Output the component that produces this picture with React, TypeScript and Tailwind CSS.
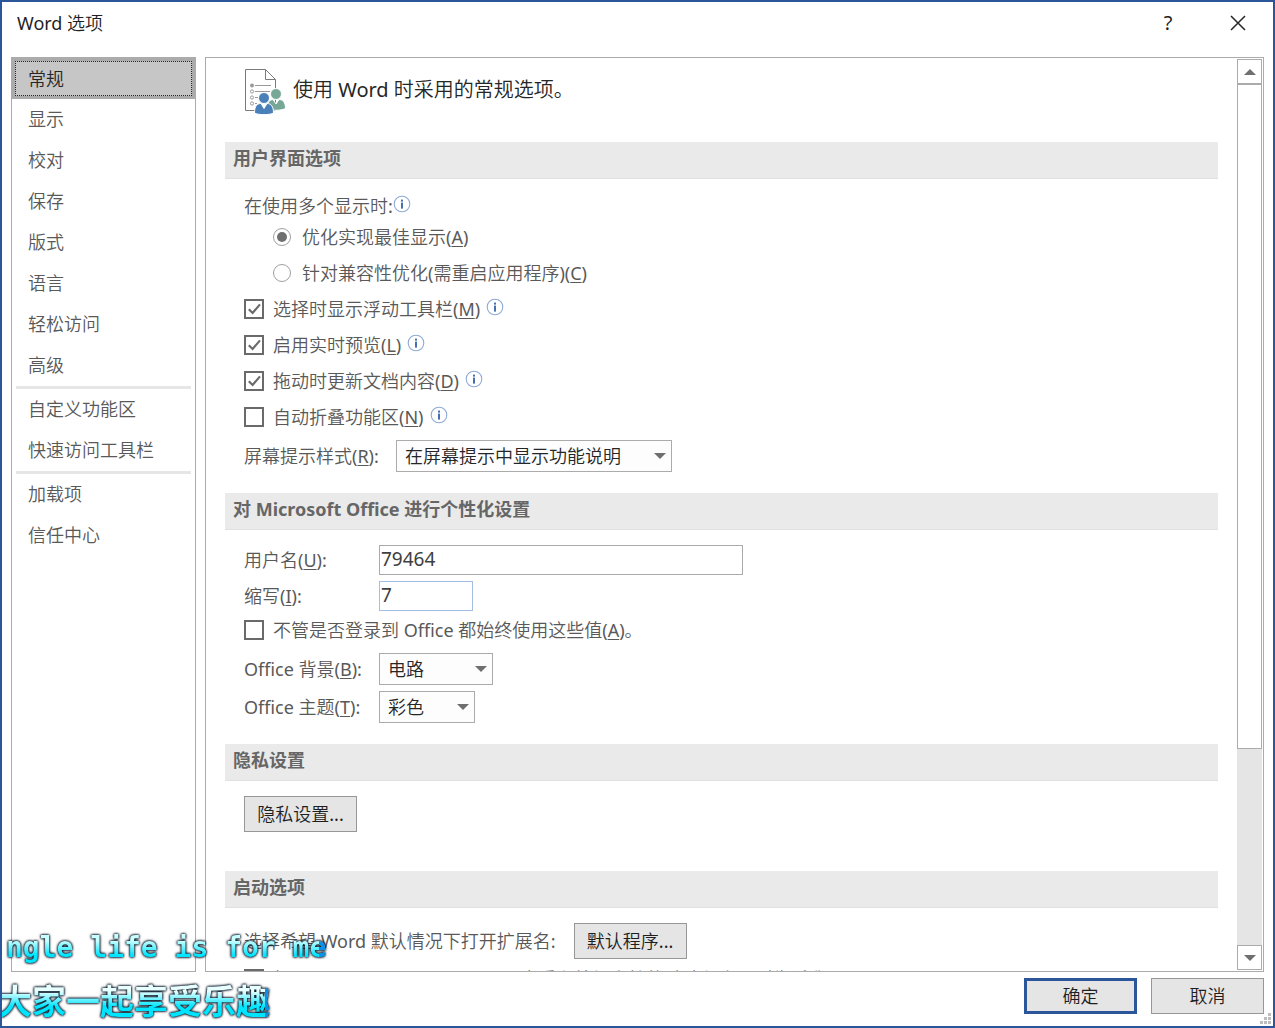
import { useState, type ReactNode } from 'react'

interface CheckOptionProps {
  label: ReactNode
  defaultChecked?: boolean
  info?: boolean
}

interface SelectBoxProps {
  id: string
  options: string[]
  className: string
}

const navGroups: string[][] = [
  ['常规', '显示', '校对', '保存', '版式', '语言', '轻松访问', '高级'],
  ['自定义功能区', '快速访问工具栏'],
  ['加载项', '信任中心'],
]

const buttonClass = 'h-9 w-[113px] shrink-0 bg-[#e5e5e5] text-[#1f1f1f]'

// Underlined access key
const Key = ({ children }: { children: string }) => (
  <span className="underline decoration-1 underline-offset-2">{children}</span>
)

const InfoIcon = () => (
  <svg width="18" height="18" viewBox="0 0 18 18" className="mb-1 shrink-0" aria-hidden="true">
    <circle cx="9" cy="9" r="7.8" fill="#fff" stroke="#8faad6" strokeWidth="1.1" />
    <rect x="8" y="4.6" width="2" height="2" fill="#456fb0" />
    <rect x="8" y="7.6" width="2" height="6" fill="#456fb0" />
  </svg>
)

function CheckOption({ label, defaultChecked = false, info = false }: CheckOptionProps) {
  return (
    <div className="flex h-9 items-center gap-1.5">
      <label className="flex items-center gap-[9px] whitespace-nowrap">
        <span className="grid size-5 place-items-center">
          <input
            type="checkbox"
            defaultChecked={defaultChecked}
            className="peer col-start-1 row-start-1 size-5 appearance-none border-2 border-[#6a6a6a] bg-white"
          />
          <svg
            viewBox="0 0 20 20"
            className="pointer-events-none col-start-1 row-start-1 hidden size-5 peer-checked:block"
            fill="none"
            stroke="#6a6a6a"
            strokeWidth="2.2"
          >
            <path d="M4.8 10.2 L8.6 14 L16 5.4" />
          </svg>
        </span>
        <span>{label}</span>
      </label>
      {info && <InfoIcon />}
    </div>
  )
}

function RadioOption({ label, defaultChecked = false }: CheckOptionProps) {
  return (
    <label className="ml-[29px] flex h-9 items-center gap-[11px] whitespace-nowrap">
      <span className="grid size-[18px] place-items-center">
        <input
          type="radio"
          name="display"
          defaultChecked={defaultChecked}
          className="peer col-start-1 row-start-1 size-[18px] appearance-none rounded-full border border-[#a0a0a0] bg-white"
        />
        <span className="pointer-events-none col-start-1 row-start-1 hidden size-2.5 rounded-full bg-[#6f6f6f] peer-checked:block" />
      </span>
      <span>{label}</span>
    </label>
  )
}

function SelectBox({ id, options, className }: SelectBoxProps) {
  return (
    <span className={`grid h-8 items-center ${className}`}>
      <select
        id={id}
        className="col-start-1 row-start-1 h-8 w-full appearance-none border border-[#ababab] bg-[#fdfdfd] pl-2 text-[#262626]"
      >
        {options.map((option) => (
          <option key={option}>{option}</option>
        ))}
      </select>
      <svg
        width="12"
        height="6"
        viewBox="0 0 12 6"
        className="pointer-events-none col-start-1 row-start-1 mr-1.5 justify-self-end"
      >
        <path d="M0 0 H12 L6 6 Z" fill="#6f6f6f" />
      </svg>
    </span>
  )
}

const SectionTitle = ({ children }: { children: ReactNode }) => (
  <h2 className="flex h-[37px] items-center border-b border-[#e0e0e0] bg-[#eaeaea] pb-1 pl-2 font-['Noto_Sans','Noto_Sans_CJK_SC',sans-serif] font-bold text-[#666]">
    {children}
  </h2>
)

const PageIcon = () => (
  <svg width="41" height="46" viewBox="0 0 41 46" className="shrink-0" aria-hidden="true">
    <path d="M0.5 0.5 H20.5 L30.5 10.5 V41.5 H0.5 Z" fill="#fff" stroke="#7b7b7b" />
    <path d="M20.5 0.5 V10.5 H30.5" fill="none" stroke="#7b7b7b" />
    <circle cx="7" cy="16.5" r="2" fill="#9a9a9a" />
    <g fill="none" stroke="#9a9a9a">
      <circle cx="7" cy="22.5" r="1.6" />
      <circle cx="7" cy="28.5" r="1.6" />
      <circle cx="7" cy="34.5" r="1.6" />
      <path d="M10 16.5 H26 M10 22.5 H25 M10 28.5 H13 M10 34.5 H12" />
    </g>
    <g fill="#77a797" stroke="#fff">
      <path d="M22 40 C22 33 25 30.5 28 30.5 L31 35 L34 30.5 C38 30.5 40.5 33.5 40.5 39.5 C37 41.5 28 42 22 40 Z" />
      <circle cx="31" cy="25" r="5.5" />
    </g>
    <g fill="#4a80b9" stroke="#fff">
      <path d="M9.5 44 C9.5 37 12 34.5 16 34.5 L19 39.5 L22 34.5 C26 34.5 28.5 37.5 28.5 44 C25 46.2 13 46.2 9.5 44 Z" />
      <circle cx="19" cy="29" r="5.5" />
    </g>
  </svg>
)

function Sidebar() {
  const [active, setActive] = useState('常规')

  return (
    <nav className="w-[185px] shrink-0 border border-[#ababab] bg-white">
      {navGroups.map((group, index) => (
        <div key={group[0]}>
          {index > 0 && <div className="mx-1 h-[3px] bg-[#e6e6e6]" />}
          {group.map((item) => (
            <button
              key={item}
              type="button"
              onClick={() => setActive(item)}
              className={`block h-[41px] w-full text-left ${
                active === item ? 'bg-[#ababab] p-[3px] text-[#262626]' : 'pb-0.5 pl-4'
              }`}
            >
              {active === item ? (
                <span className="flex h-full items-center border border-dotted border-[#262626] bg-[#c6c6c6] pl-3">
                  {item}
                </span>
              ) : (
                item
              )}
            </button>
          ))}
        </div>
      ))}
    </nav>
  )
}

function ScrollBar() {
  return (
    <div className="my-px mr-px flex w-[25px] shrink-0 flex-col bg-[#e5e5e5]">
      <button type="button" aria-label="向上滚动" className="grid h-[25px] place-items-center border border-[#ababab] bg-white">
        <svg width="12" height="6" viewBox="0 0 12 6">
          <path d="M0 6 H12 L6 0 Z" fill="#6f6f6f" />
        </svg>
      </button>
      <div className="flex-1">
        <div className="h-[77.25%] border border-[#ababab] bg-white" />
      </div>
      <button type="button" aria-label="向下滚动" className="grid h-[25px] place-items-center border border-[#ababab] bg-white">
        <svg width="12" height="6" viewBox="0 0 12 6">
          <path d="M0 0 H12 L6 6 Z" fill="#6f6f6f" />
        </svg>
      </button>
    </div>
  )
}

function GeneralOptions() {
  return (
    <main className="min-w-0 flex-1 overflow-hidden px-[19px]">
      <header className="flex h-[84px] items-start gap-[7px] pt-[11px] pl-5">
        <PageIcon />
        <h1 className="text-xl leading-[42px] text-[#262626]">使用 Word 时采用的常规选项。</h1>
      </header>

      <SectionTitle>用户界面选项</SectionTitle>
      <div className="pt-[13px] pb-[21px] pl-[19px]">
        <div className="flex h-[27px] items-center">
          在使用多个显示时:
          <InfoIcon />
        </div>
        <RadioOption label={<>优化实现最佳显示(<Key>A</Key>)</>} defaultChecked />
        <RadioOption label={<>针对兼容性优化(需重启应用程序)(<Key>C</Key>)</>} />
        <CheckOption label={<>选择时显示浮动工具栏(<Key>M</Key>)</>} defaultChecked info />
        <CheckOption label={<>启用实时预览(<Key>L</Key>)</>} defaultChecked info />
        <CheckOption label={<>拖动时更新文档内容(<Key>D</Key>)</>} defaultChecked info />
        <CheckOption label={<>自动折叠功能区(<Key>N</Key>)</>} info />
        <div className="mt-[5px] flex items-center">
          <label htmlFor="tips" className="w-[152px] shrink-0">屏幕提示样式(<Key>R</Key>):</label>
          <SelectBox
            id="tips"
            className="w-[276px]"
            options={['在屏幕提示中显示功能说明', '不在屏幕提示中显示功能说明', '不显示屏幕提示']}
          />
        </div>
      </div>

      <SectionTitle>对 Microsoft Office 进行个性化设置</SectionTitle>
      <div className="pt-[15px] pb-[21px] pl-[19px]">
        <div className="flex items-center">
          <label htmlFor="user" className="w-[135px] shrink-0">用户名(<Key>U</Key>):</label>
          <input id="user" defaultValue="79464" className="h-[30px] w-[364px] border border-[#ababab] px-px pb-0.5 text-[19px] text-[#404040]" />
        </div>
        <div className="mt-1.5 mb-px flex items-center">
          <label htmlFor="initials" className="w-[135px] shrink-0">缩写(<Key>I</Key>):</label>
          <input id="initials" defaultValue="7" className="h-[30px] w-[94px] border border-[#a3bde3] px-px pb-0.5 text-[19px] text-[#404040]" />
        </div>
        <CheckOption label={<>不管是否登录到 Office 都始终使用这些值(<Key>A</Key>)。</>} />
        <div className="mt-[5px] flex items-center">
          <label htmlFor="background" className="w-[135px] shrink-0">Office 背景(<Key>B</Key>):</label>
          <SelectBox id="background" className="w-[114px]" options={['电路', '云', '无背景']} />
        </div>
        <div className="mt-1.5 flex items-center">
          <label htmlFor="theme" className="w-[135px] shrink-0">Office 主题(<Key>T</Key>):</label>
          <SelectBox id="theme" className="w-24" options={['彩色', '深灰色', '黑色', '白色']} />
        </div>
      </div>

      <SectionTitle>隐私设置</SectionTitle>
      <div className="pt-[15px] pb-[39px] pl-[19px]">
        <button type="button" className={`${buttonClass} border border-[#979797]`}>隐私设置...</button>
      </div>

      <SectionTitle>启动选项</SectionTitle>
      <div className="pt-[15px] pl-[19px]">
        <div className="mb-0.5 flex items-center gap-[18px] whitespace-nowrap">
          选择希望 Word 默认情况下打开扩展名:
          <button type="button" className={`${buttonClass} border border-[#979797]`}>默认程序...</button>
        </div>
        <CheckOption
          label={<>如果 Microsoft Word 不是用于查看和编辑文档的默认程序，则告诉我(<Key>T</Key>)</>}
        />
      </div>
    </main>
  )
}

// Desktop lyrics floating above the dialog
function Lyrics() {
  return (
    <div className="pointer-events-none absolute bottom-1 -left-1 font-['Noto_Sans_CJK_SC',sans-serif] font-bold whitespace-pre [filter:drop-shadow(0_0_1px_#012)_drop-shadow(0_0_1px_#012)]">
      <p className="w-fit bg-[linear-gradient(to_right,transparent_98%,#0a8fe8_98%),linear-gradient(#c8ffff_30%,#00e5ff_70%)] bg-clip-text pl-2 font-['DejaVu_Sans_Mono','Noto_Sans_CJK_SC',monospace] text-[28px] leading-9 text-transparent">
        ngle life is for me
      </p>
      <p className="mt-3 w-fit bg-[linear-gradient(to_right,transparent_98%,#0a8fe8_98%),linear-gradient(#e8ffff_30%,#00e5ff_65%)] bg-clip-text text-[34px] leading-[44px] text-transparent">
        大家一起享受乐趣
      </p>
    </div>
  )
}

export default function App() {
  return (
    <div className="relative flex h-screen flex-col overflow-hidden border-2 border-[#2b579a] bg-white font-['Noto_Sans','Noto_Sans_CJK_SC_DemiLight','Noto_Sans_CJK_SC_Light','Noto_Sans_CJK_SC',sans-serif] text-lg leading-6 font-normal text-[#595959]">
      <div className="flex h-[55px] shrink-0 items-start justify-between pt-[9px] pr-[27px] pl-[15px] text-[#1f1f1f]">
        <span>Word 选项</span>
        <div className="flex items-center gap-[52px]">
          <button type="button" aria-label="帮助" className="w-5 text-xl leading-6">?</button>
          <button type="button" aria-label="关闭">
            <svg width="16" height="16" viewBox="0 0 16 16" fill="none" stroke="#262626" strokeWidth="1.5">
              <path d="M1 1 L15 15 M15 1 L1 15" />
            </svg>
          </button>
        </div>
      </div>

      <div className="flex min-h-0 flex-1 gap-[9px] px-[9px]">
        <Sidebar />
        <div className="flex min-w-0 flex-1 border border-[#ababab]">
          <GeneralOptions />
          <ScrollBar />
        </div>
      </div>

      <footer className="flex shrink-0 justify-end gap-3.5 pt-1.5 pr-[9px] pb-3">
        <button type="button" className={`${buttonClass} border-[3px] border-[#2b579a]`}>确定</button>
        <button type="button" className={`${buttonClass} border border-[#979797]`}>取消</button>
      </footer>

      {/* Resize grip */}
      <svg width="11" height="11" viewBox="0 0 11 11" className="absolute right-0.5 bottom-0.5" fill="#bdbdbd">
        <path d="M8 0h3v3h-3z M4 4h3v3h-3z M8 4h3v3h-3z M0 8h3v3h-3z M4 8h3v3h-3z M8 8h3v3h-3z" />
      </svg>

      <Lyrics />
    </div>
  )
}
